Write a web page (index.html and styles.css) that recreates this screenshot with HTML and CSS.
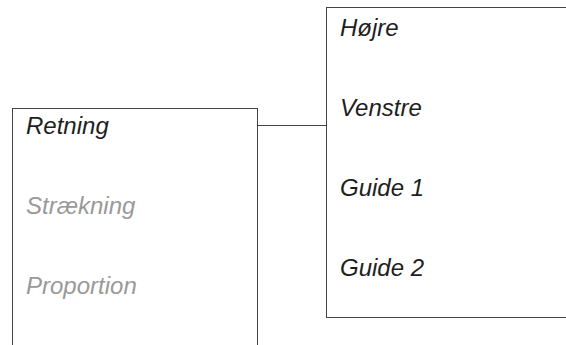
FILE: index.html
```html
<!DOCTYPE html>
<html lang="da">
  <head>
    <meta charset="UTF-8" />
    <meta name="viewport" content="width=device-width, initial-scale=1.0" />
    <title>Retning</title>
    <link rel="stylesheet" href="styles.css">
  </head>
  <body>
    <div class="diagram">
      <div class="box box-left">
        <div class="item">Retning</div>
        <div class="item muted">Strækning</div>
        <div class="item muted">Proportion</div>
      </div>
      <div class="connector"></div>
      <div class="box box-right">
        <div class="item">Højre</div>
        <div class="item">Venstre</div>
        <div class="item">Guide 1</div>
        <div class="item">Guide 2</div>
      </div>
    </div>
  </body>
</html>
```

FILE: styles.css
```css
html,
body {
  margin: 0;
  background: #fff;
}

.diagram {
  display: flex;
  align-items: flex-start;
  height: 345px;
  overflow: hidden;
  font-family: "Liberation Sans", Arial, sans-serif;
  font-size: 24px;
  font-style: italic;
  color: #1e1e1e;
}

.box {
  box-sizing: border-box;
  border: 1px solid #444;
  display: flex;
  flex-direction: column;
  gap: 52px;
  padding-left: 13px;
  flex-shrink: 0;
}

.box-left {
  margin-left: 12px;
  margin-top: 108px;
  width: 246px;
  height: 260px;
  padding-top: 3px;
}

.box-right {
  margin-top: 7px;
  width: 260px;
  height: 311px;
  padding-top: 6px;
}

.connector {
  flex-shrink: 0;
  width: 68px;
  height: 1px;
  margin-top: 125px;
  background: #444;
}

.item {
  line-height: 28px;
  white-space: nowrap;
}

.muted {
  color: #999;
}
```
